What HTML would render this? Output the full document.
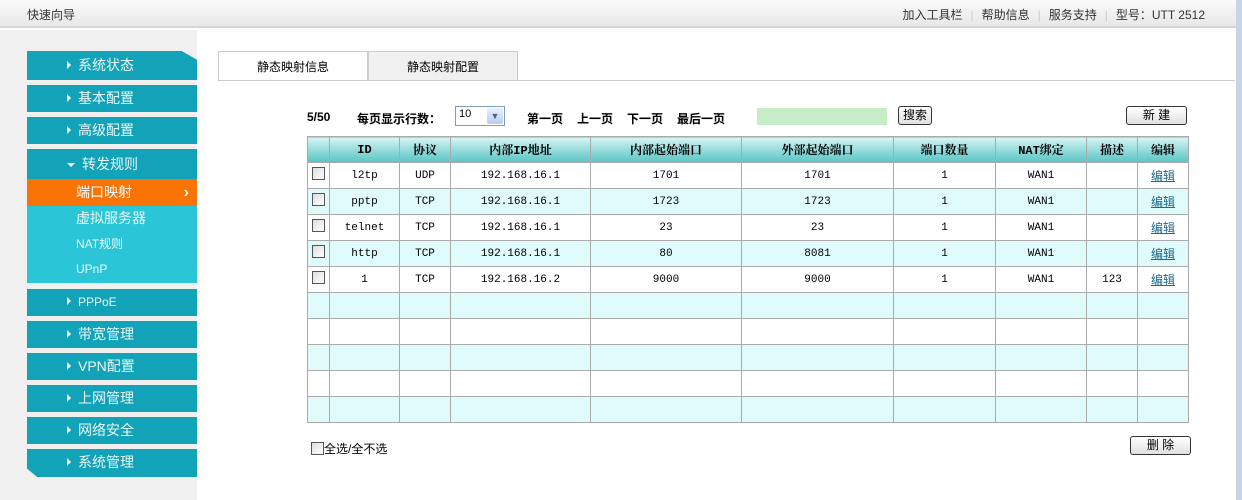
<!DOCTYPE html>
<html><head><meta charset="utf-8"><style>
*{margin:0;padding:0;box-sizing:border-box}
body{width:1242px;height:500px;overflow:hidden;background:#fff;font-family:"Liberation Sans","Noto Sans CJK SC",sans-serif;font-size:12px;color:#000;position:relative}
.top{position:absolute;left:0;top:0;width:1242px;height:28px;background:linear-gradient(#fafafa,#e8e8e8);border-bottom:2px solid #d6d6d6}
.top .l{position:absolute;left:27px;top:6px;font-size:12px;color:#333}
.top .r{position:absolute;right:37px;top:6px;font-size:12px;color:#333}
.top .r span.s{color:#ccc;margin:0 8px}
.side{position:absolute;left:0;top:30px;width:197px;height:470px;background:#f0f0f0}
.rs{position:absolute;left:1236px;top:0;width:6px;height:500px;background:#c8d4e8}
.m{position:absolute;left:27px;width:170px;background:#13a3b9;color:#e8f8fa;font-size:14px;line-height:27px;padding-left:40px}
.m:before{content:"";display:inline-block;border-left:4px solid #fff;border-top:4px solid transparent;border-bottom:4px solid transparent;margin-right:7px;vertical-align:1px}
.m.d:before{border-top:4px solid #fff;border-left:4px solid transparent;border-right:4px solid transparent;border-bottom:0;vertical-align:2px}
.sub{position:absolute;left:27px;width:170px;background:#2ac5d6;color:#eaf9fb;font-size:14px;padding-left:49px;line-height:25px}
.tab{position:absolute;top:51px;height:30px;width:150px;text-align:center;line-height:30px;font-size:12px;border:1px solid #ccc;border-bottom:none}
table{position:absolute;left:307px;top:136px;border-collapse:collapse;font-family:"Liberation Mono","SimSun","Noto Serif CJK SC",monospace;font-size:11px}
td,th{border:1px solid #aaa;text-align:center;height:26px;padding:0}
th{background:linear-gradient(#d8f4f4,#58c4c4);font-weight:bold;font-size:12px}
tr.a td{background:#e0fbfc}
.cb{display:inline-block;width:13px;height:13px;border:1px solid #555;background:linear-gradient(135deg,#ddd,#fff)}
a{color:#1a6a8a;text-decoration:underline;font-family:"Liberation Sans","Noto Sans CJK SC",sans-serif;font-size:12px}
.btn{position:absolute;border:1px solid #333;border-radius:3px;background:linear-gradient(#fff,#e0e0e0);text-align:center;font-size:12px}
.pg{position:absolute;top:110px;font-weight:bold;font-size:12px}
</style></head><body>
<div class="top"><div class="l">快速向导</div><div class="r">加入工具栏<span class="s">|</span>帮助信息<span class="s">|</span>服务支持<span class="s">|</span>型号：UTT 2512</div></div>
<div class="side"></div>
<div class="rs"></div>
<div class="m" style="top:51px;height:29px;line-height:29px;clip-path:polygon(0 0,91% 0,100% 30%,100% 100%,0 100%)">系统状态</div>
<div class="m" style="top:85px">基本配置</div>
<div class="m" style="top:117px">高级配置</div>
<div class="m d" style="top:149px;height:30px;line-height:30px">转发规则</div>
<div class="sub" style="top:179px;height:27px;line-height:27px;background:#f97305;color:#fff">端口映射<span style="position:absolute;right:8px;font-weight:bold;font-size:16px">›</span></div>
<div class="sub" style="top:206px;height:26px">虚拟服务器</div>
<div class="sub" style="top:232px;height:25px;font-size:12px">NAT规则</div>
<div class="sub" style="top:257px;height:26px;font-size:12px">UPnP</div>
<div class="m" style="top:289px;font-size:12px">PPPoE</div>
<div class="m" style="top:321px">带宽管理</div>
<div class="m" style="top:353px">VPN配置</div>
<div class="m" style="top:385px">上网管理</div>
<div class="m" style="top:417px">网络安全</div>
<div class="m" style="top:449px;height:28px;clip-path:polygon(0 0,100% 0,100% 100%,6% 100%,0 70%)">系统管理</div>
<div class="tab" style="left:218px;background:#fff">静态映射信息</div>
<div class="tab" style="left:368px;background:#f0f0f0;height:29px">静态映射配置</div>
<div style="position:absolute;left:218px;top:80px;width:1017px;height:1px;background:#ccc"></div>
<div class="pg" style="left:307px">5/50</div>
<div class="pg" style="left:357px">每页显示行数：</div>
<div style="position:absolute;left:455px;top:106px;width:50px;height:20px;border:1px solid #7f9db9;background:#fff;font-size:11px;padding:1px 3px">10<span style="position:absolute;right:1px;top:1px;width:16px;height:16px;background:linear-gradient(#e8f0fc,#b8cdf0);border-radius:2px;color:#4d6185;font-size:9px;text-align:center;line-height:16px">▼</span></div>
<div class="pg" style="left:527px">第一页</div>
<div class="pg" style="left:577px">上一页</div>
<div class="pg" style="left:627px">下一页</div>
<div class="pg" style="left:677px">最后一页</div>
<div style="position:absolute;left:757px;top:108px;width:130px;height:17px;background:#c6ecc8"></div>
<div class="btn" style="left:898px;top:106px;width:34px;height:19px;line-height:17px">搜索</div>
<div class="btn" style="left:1126px;top:106px;width:61px;height:19px;line-height:17px">新 建</div>
<table>
<colgroup><col style="width:22px"><col style="width:70px"><col style="width:51px"><col style="width:140px"><col style="width:151px"><col style="width:152px"><col style="width:102px"><col style="width:91px"><col style="width:51px"><col style="width:51px"></colgroup>
<tr><th></th><th>ID</th><th>协议</th><th>内部IP地址</th><th>内部起始端口</th><th>外部起始端口</th><th>端口数量</th><th>NAT绑定</th><th>描述</th><th>编辑</th></tr>
<tr><td><span class="cb"></span></td><td>l2tp</td><td>UDP</td><td>192.168.16.1</td><td>1701</td><td>1701</td><td>1</td><td>WAN1</td><td></td><td><a>编辑</a></td></tr>
<tr class="a"><td><span class="cb"></span></td><td>pptp</td><td>TCP</td><td>192.168.16.1</td><td>1723</td><td>1723</td><td>1</td><td>WAN1</td><td></td><td><a>编辑</a></td></tr>
<tr><td><span class="cb"></span></td><td>telnet</td><td>TCP</td><td>192.168.16.1</td><td>23</td><td>23</td><td>1</td><td>WAN1</td><td></td><td><a>编辑</a></td></tr>
<tr class="a"><td><span class="cb"></span></td><td>http</td><td>TCP</td><td>192.168.16.1</td><td>80</td><td>8081</td><td>1</td><td>WAN1</td><td></td><td><a>编辑</a></td></tr>
<tr><td><span class="cb"></span></td><td>1</td><td>TCP</td><td>192.168.16.2</td><td>9000</td><td>9000</td><td>1</td><td>WAN1</td><td>123</td><td><a>编辑</a></td></tr>
<tr class="a"><td></td><td></td><td></td><td></td><td></td><td></td><td></td><td></td><td></td><td></td></tr>
<tr><td></td><td></td><td></td><td></td><td></td><td></td><td></td><td></td><td></td><td></td></tr>
<tr class="a"><td></td><td></td><td></td><td></td><td></td><td></td><td></td><td></td><td></td><td></td></tr>
<tr><td></td><td></td><td></td><td></td><td></td><td></td><td></td><td></td><td></td><td></td></tr>
<tr class="a"><td></td><td></td><td></td><td></td><td></td><td></td><td></td><td></td><td></td><td></td></tr>
</table>
<div style="position:absolute;left:311px;top:440px;font-size:12px"><span class="cb" style="vertical-align:-2px"></span>全选/全不选</div>
<div class="btn" style="left:1130px;top:436px;width:61px;height:19px;line-height:17px">删 除</div>
</body></html>
